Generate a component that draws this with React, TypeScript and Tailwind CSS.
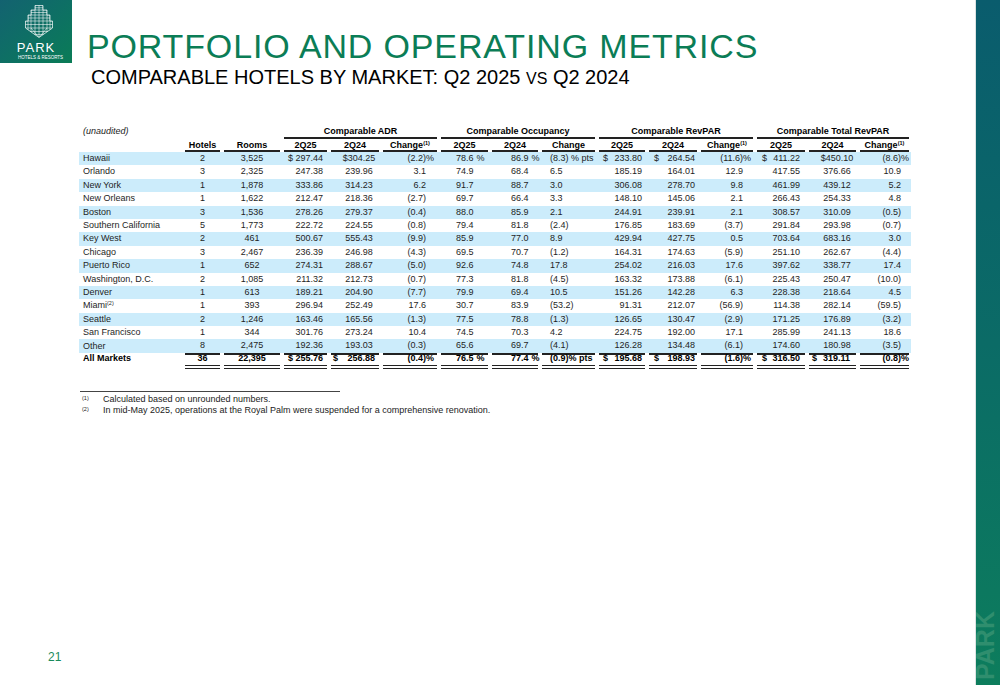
import React from "react";

const grid =
  "grid grid-cols-[104px_39px_60px_47px_52px_58px_51px_50px_57px_50px_52px_56px_52px_51px_53px]";

type Col = { j: string; p: string; d?: string; pct?: boolean; gap?: string };

// per-column alignment and padding (inside the 2px-inset cell box)
const cols: Col[] = [
  { j: "justify-start", p: "pl-[2px]" },
  { j: "justify-center", p: "" },
  { j: "justify-center", p: "" },
  { j: "justify-end", p: "pl-[4px] pr-[4px]" },
  { j: "justify-center", p: "pl-[8px]", d: "pl-[2px] pr-[4px]" },
  { j: "justify-end", p: "pr-[3px]", pct: true },
  { j: "justify-start", p: "pl-[15px]", gap: "ml-[3px]" },
  { j: "justify-start", p: "pl-[19px]", gap: "ml-[3px]" },
  { j: "justify-start", p: "pl-[8px]" },
  { j: "justify-end", p: "pl-[4px] pr-[3px]" },
  { j: "justify-end", p: "pl-[5px] pr-[2px]" },
  { j: "justify-end", p: "pr-[2px]", pct: true },
  { j: "justify-end", p: "pl-[5px] pr-[5px]" },
  { j: "justify-center", p: "pl-[9px]", d: "pl-[3px] pr-[6px]" },
  { j: "justify-end", p: "pr-[0px]", pct: true },
];

const data: string[][] = [
  ["Hawaii", "2", "3,525", "$ 297.44", "$304.25", "(2.2)%", "78.6 %", "86.9 %", "(8.3) % pts", "$ 233.80", "$ 264.54", "(11.6)%", "$ 411.22", "$450.10", "(8.6)%"],
  ["Orlando", "3", "2,325", "247.38", "239.96", "3.1", "74.9", "68.4", "6.5", "185.19", "164.01", "12.9", "417.55", "376.66", "10.9"],
  ["New York", "1", "1,878", "333.86", "314.23", "6.2", "91.7", "88.7", "3.0", "306.08", "278.70", "9.8", "461.99", "439.12", "5.2"],
  ["New Orleans", "1", "1,622", "212.47", "218.36", "(2.7)", "69.7", "66.4", "3.3", "148.10", "145.06", "2.1", "266.43", "254.33", "4.8"],
  ["Boston", "3", "1,536", "278.26", "279.37", "(0.4)", "88.0", "85.9", "2.1", "244.91", "239.91", "2.1", "308.57", "310.09", "(0.5)"],
  ["Southern California", "5", "1,773", "222.72", "224.55", "(0.8)", "79.4", "81.8", "(2.4)", "176.85", "183.69", "(3.7)", "291.84", "293.98", "(0.7)"],
  ["Key West", "2", "461", "500.67", "555.43", "(9.9)", "85.9", "77.0", "8.9", "429.94", "427.75", "0.5", "703.64", "683.16", "3.0"],
  ["Chicago", "3", "2,467", "236.39", "246.98", "(4.3)", "69.5", "70.7", "(1.2)", "164.31", "174.63", "(5.9)", "251.10", "262.67", "(4.4)"],
  ["Puerto Rico", "1", "652", "274.31", "288.67", "(5.0)", "92.6", "74.8", "17.8", "254.02", "216.03", "17.6", "397.62", "338.77", "17.4"],
  ["Washington, D.C.", "2", "1,085", "211.32", "212.73", "(0.7)", "77.3", "81.8", "(4.5)", "163.32", "173.88", "(6.1)", "225.43", "250.47", "(10.0)"],
  ["Denver", "1", "613", "189.21", "204.90", "(7.7)", "79.9", "69.4", "10.5", "151.26", "142.28", "6.3", "228.38", "218.64", "4.5"],
  ["Miami", "1", "393", "296.94", "252.49", "17.6", "30.7", "83.9", "(53.2)", "91.31", "212.07", "(56.9)", "114.38", "282.14", "(59.5)"],
  ["Seattle", "2", "1,246", "163.46", "165.56", "(1.3)", "77.5", "78.8", "(1.3)", "126.65", "130.47", "(2.9)", "171.25", "176.89", "(3.2)"],
  ["San Francisco", "1", "344", "301.76", "273.24", "10.4", "74.5", "70.3", "4.2", "224.75", "192.00", "17.1", "285.99", "241.13", "18.6"],
  ["Other", "8", "2,475", "192.36", "193.03", "(0.3)", "65.6", "69.7", "(4.1)", "126.28", "134.48", "(6.1)", "174.60", "180.98", "(3.5)"],
];

const total = ["All Markets", "36", "22,395", "$ 255.76", "$ 256.88", "(0.4)%", "76.5 %", "77.4 %", "(0.9)% pts", "$ 195.68", "$ 198.93", "(1.6)%", "$ 316.50", "$ 319.11", "(0.8)%"];

const heads = ["", "Hotels", "Rooms", "2Q25", "2Q24", "Change*", "2Q25", "2Q24", "Change", "2Q25", "2Q24", "Change*", "2Q25", "2Q24", "Change*"];

function Sup({ n }: { n: number }) {
  return <sup className="top-[-3px] text-[5.5px]">({n})</sup>;
}

function Value({ v, i }: { v: string; i: number }) {
  const c = cols[i];
  if (v.startsWith("$ ")) {
    return (
      <div className={`flex w-full justify-between ${c.d ?? c.p}`}>
        <span>$</span>
        <span>{v.slice(2)}</span>
      </div>
    );
  }
  if (c.pct) {
    const has = v.endsWith("%");
    return (
      <span className={c.p}>
        {has ? v.slice(0, -1) : v}
        <span className="inline-block w-[8px] text-left">{has ? "%" : ""}</span>
      </span>
    );
  }
  if (c.gap && v.endsWith(" %")) {
    return (
      <span className={c.p}>
        {v.slice(0, -2)}
        <span className={c.gap}>%</span>
      </span>
    );
  }
  if (i === 0 && v === "Miami") {
    return (
      <span className={c.p}>
        Miami
        <Sup n={2} />
      </span>
    );
  }
  return <span className={c.p}>{v}</span>;
}

function Logo() {
  const v = [3, 6, 10, 14, 18, 22, 25];
  const h = [2.75, 5, 7.5, 10, 13, 16, 19.5, 23, 26.5, 29.5];
  return (
    <svg width="28" height="33" viewBox="0 0 28 33" fill="none" stroke="white" strokeWidth="0.7">
      <defs>
        <clipPath id="tower">
          <path d="M10 0.5H18V5H22V10H25V16H27.5V23L14 32.5L0.5 23V16H3V10H6V5H10Z" />
        </clipPath>
      </defs>
      <g clipPath="url(#tower)" strokeWidth="0.55">
        {v.map((x) => (
          <line key={"v" + x} x1={x} y1="0" x2={x} y2="33" />
        ))}
        {h.map((y) => (
          <line key={"h" + y} x1="0" y1={y} x2="28" y2={y} />
        ))}
        <line x1="14" y1="32.5" x2="6" y2="23" />
        <line x1="14" y1="32.5" x2="22" y2="23" />
      </g>
      <path d="M10 0.5H18V5H22V10H25V16H27.5V23L14 32.5L0.5 23V16H3V10H6V5H10Z" />
    </svg>
  );
}

export default function App() {
  return (
    <div className="flex h-[685px] w-[1000px] overflow-hidden bg-white font-['Liberation_Sans',Arial,sans-serif]">
      <div className="flex flex-1 flex-col">
        {/* header */}
        <div className="flex">
          <div className="flex h-[63px] w-[72px] shrink-0 flex-col items-center bg-linear-to-br from-[#136270] to-[#0a7c56] pt-[5px] text-white">
            <div className="ml-[6px]">
              <Logo />
            </div>
            <div className="mt-[3px] text-[13px] leading-none tracking-[1px]">PARK</div>
            <div className="ml-[9px] mt-[2px] whitespace-nowrap text-[4.5px] leading-none">HOTELS &amp; RESORTS</div>
          </div>
          <div className="pl-[15px] pt-[29px]">
            <div className="whitespace-nowrap text-[34px] leading-none tracking-[0.85px] text-[#0b7d56]">
              PORTFOLIO AND OPERATING METRICS
            </div>
            <div className="ml-[4px] mt-[4px] whitespace-nowrap text-[20px] leading-none text-black">
              COMPARABLE HOTELS BY MARKET: Q2 2025 <span className="text-[16px]">VS</span> Q2 2024
            </div>
          </div>
        </div>

        {/* table */}
        <div className="ml-[79px] mt-[36px] w-[832px] whitespace-nowrap text-[9px] text-[#1e1e1e]">
          <div className={`${grid} h-[16px] font-bold text-black`}>
            <div className="self-end pb-[3px] pl-[4px] font-normal italic leading-[10px] text-[#222]">(unaudited)</div>
            <div />
            <div />
            {["Comparable ADR", "Comparable Occupancy", "Comparable RevPAR", "Comparable Total RevPAR"].map((g) => (
              <div key={g} className="col-span-3 mx-[2px] self-end border-b-2 border-[#222] pb-[1px] text-center leading-[10px]">
                {g}
              </div>
            ))}
          </div>
          <div className={`${grid} h-[13px] font-bold text-black`}>
            {heads.map((t, i) =>
              i === 0 ? (
                <div key={i} />
              ) : (
                <div key={i} className="mx-[2px] self-end border-b-2 border-[#222] text-center leading-[10px]">
                  {t.replace("*", "")}
                  {t.endsWith("*") && <Sup n={1} />}
                </div>
              )
            )}
          </div>
          {data.map((r, ri) => (
            <div key={r[0]} className={`${grid} h-[13.4px] ${ri % 2 === 0 ? "bg-[#ccecfb]" : ""}`}>
              {r.map((v, i) => (
                <div
                  key={i}
                  className={`mx-[2px] flex h-full items-center ${cols[i].j} ${
                    ri === data.length - 1 && i > 0 ? "border-b-2 border-[#222]" : ""
                  }`}
                >
                  <Value v={v} i={i} />
                </div>
              ))}
            </div>
          ))}
          <div className={`${grid} font-bold text-black`}>
            {total.map((v, i) => (
              <div
                key={i}
                className={`mx-[2px] flex h-[16px] items-center ${cols[i].j} ${
                  i > 0 ? "border-b-4 border-double border-[#222]" : "border-b-4 border-transparent"
                }`}
              >
                <Value v={v} i={i} />
              </div>
            ))}
          </div>
        </div>

        {/* footnotes */}
        <div className="ml-[80px] mt-[22px] w-[260px] border-t border-[#444]" />
        <div className="ml-[80px] mt-[2px] text-[9px] text-[#222]">
          <div className="flex leading-[11px]">
            <span className="w-[23px] pl-[2px] text-[5.5px] leading-[8px]">(1)</span>
            <span>Calculated based on unrounded numbers.</span>
          </div>
          <div className="flex leading-[11px]">
            <span className="w-[23px] pl-[2px] text-[5.5px] leading-[8px]">(2)</span>
            <span>In mid-May 2025, operations at the Royal Palm were suspended for a comprehensive renovation.</span>
          </div>
        </div>

        <div className="flex-1" />
        <div className="pb-[22px] pl-[48px] text-[12px] leading-none text-[#1a8a5c]">21</div>
      </div>

      {/* side bar */}
      <div className="relative w-[25px] shrink-0 overflow-hidden border-l border-[#dde3e3] bg-linear-to-b from-[#0a5c6d] via-[#0b6b66] to-[#0d7d5c]">
        <span className="absolute bottom-[27px] left-[-26px] w-[71px] -rotate-90 whitespace-nowrap text-center text-[25px] font-bold leading-none text-[#2f8e6e]">
          PARK
        </span>
      </div>
    </div>
  );
}
